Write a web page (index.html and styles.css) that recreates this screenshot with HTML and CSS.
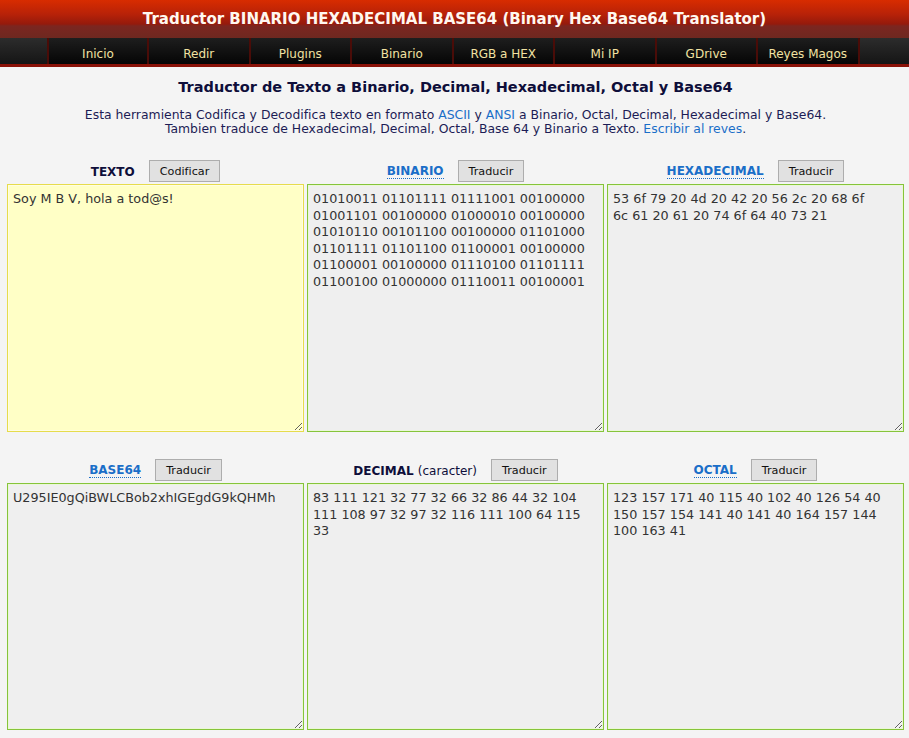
FILE: index.html
```html
<!DOCTYPE html>
<html lang="es">
<head>
<meta charset="utf-8">
<title>Traductor BINARIO HEXADECIMAL BASE64</title>
<link rel="stylesheet" href="styles.css">
</head>
<body>
<header class="top">
  <div class="title">Traductor BINARIO HEXADECIMAL BASE64 (Binary Hex Base64 Translator)</div>
</header>
<nav class="nav">
  <ul class="tabs">
    <li><a href="#">Inicio</a></li>
    <li><a href="#">Redir</a></li>
    <li><a href="#">Plugins</a></li>
    <li><a href="#">Binario</a></li>
    <li><a href="#">RGB a HEX</a></li>
    <li><a href="#">Mi IP</a></li>
    <li><a href="#">GDrive</a></li>
    <li><a href="#">Reyes Magos</a></li>
  </ul>
</nav>
<main class="content">
  <h1 class="heading">Traductor de Texto a Binario, Decimal, Hexadecimal, Octal y Base64</h1>
  <p class="intro">Esta herramienta Codifica y Decodifica texto en formato <a href="#">ASCII</a> y <a href="#">ANSI</a> a Binario, Octal, Decimal, Hexadecimal y Base64.<br>Tambien traduce de Hexadecimal, Decimal, Octal, Base 64 y Binario a Texto. <a href="#">Escribir al reves</a>.</p>

  <div class="grid">
    <div class="cell">
      <div class="label-row"><span class="lbl">TEXTO</span><button class="btn">Codificar</button></div>
      <textarea class="box box-text" spellcheck="false">Soy M B V, hola a tod@s!</textarea>
    </div>
    <div class="cell">
      <div class="label-row"><a class="lbl lnk" href="#">BINARIO</a><button class="btn">Traducir</button></div>
      <textarea class="box" spellcheck="false">01010011 01101111 01111001 00100000 01001101 00100000 01000010 00100000 01010110 00101100 00100000 01101000 01101111 01101100 01100001 00100000 01100001 00100000 01110100 01101111 01100100 01000000 01110011 00100001</textarea>
    </div>
    <div class="cell">
      <div class="label-row"><a class="lbl lnk" href="#">HEXADECIMAL</a><button class="btn">Traducir</button></div>
      <textarea class="box box-hex" spellcheck="false">53 6f 79 20 4d 20 42 20 56 2c 20 68 6f 6c 61 20 61 20 74 6f 64 40 73 21</textarea>
    </div>
    <div class="cell lower">
      <div class="label-row"><a class="lbl lnk" href="#">BASE64</a><button class="btn">Traducir</button></div>
      <textarea class="box" spellcheck="false">U295IE0gQiBWLCBob2xhIGEgdG9kQHMh</textarea>
    </div>
    <div class="cell lower">
      <div class="label-row"><span class="lbl">DECIMAL <span class="sub">(caracter)</span></span><button class="btn">Traducir</button></div>
      <textarea class="box" spellcheck="false">83 111 121 32 77 32 66 32 86 44 32 104 111 108 97 32 97 32 116 111 100 64 115 33</textarea>
    </div>
    <div class="cell lower">
      <div class="label-row"><a class="lbl lnk" href="#">OCTAL</a><button class="btn">Traducir</button></div>
      <textarea class="box" spellcheck="false">123 157 171 40 115 40 102 40 126 54 40 150 157 154 141 40 141 40 164 157 144 100 163 41</textarea>
    </div>
  </div>
</main>
</body>
</html>
```

FILE: styles.css
```css
html, body {
  margin: 0;
  padding: 0;
}
body {
  background: #f4f4f4;
  font-family: "DejaVu Sans", Verdana, sans-serif;
  color: #222;
  overflow: hidden;
}
.top {
  height: 38px;
  background: linear-gradient(to bottom, #d82c00 0px, #b82208 14px, #951a0c 24px, #7c2620 26px, #6e2820 38px);
  display: flex;
  align-items: flex-start;
  justify-content: center;
}
.title {
  color: #fff8f0;
  font-weight: bold;
  font-size: 15px;
  margin-top: 10px;
}
.nav {
  height: 26px;
  background: linear-gradient(to bottom, #2c2c2c, #151515);
  border-bottom: 3px solid #8a1208;
}
.tabs {
  list-style: none;
  margin: 0 0 0 47px;
  padding: 0;
  display: flex;
  height: 26px;
}
.tabs li {
  width: 98px;
  border-left: 2px solid #4a0c08;
  border-right: 2px solid #4a0c08;
  background: linear-gradient(to bottom, #1e1e1e, #050505);
  display: flex;
  align-items: center;
  justify-content: center;
}
.tabs li + li {
  border-left: 0;
  width: 99.5px;
}
.tabs a {
  color: #f2e2a2;
  text-decoration: none;
  font-size: 12px;
  padding-top: 6px;
}
.content {
  padding: 0 5px 0 7px;
}
.heading {
  margin: 12px 0 0;
  text-align: center;
  font-size: 14.5px;
  font-weight: bold;
  color: #0e0e3a;
}
.intro {
  margin: 13px 0 0;
  text-align: center;
  font-size: 12.4px;
  line-height: 14px;
  color: #1c1c55;
}
.intro a, .lnk {
  color: #1a6ec8;
  text-decoration: none;
}
.grid {
  display: grid;
  grid-template-columns: repeat(3, 1fr);
  column-gap: 3px;
  margin-top: 22px;
}
.cell {
  display: flex;
  flex-direction: column;
}
.cell.lower {
  margin-top: 25px;
}
.cell.lower .box {
  height: 247px;
}
.label-row {
  height: 26px;
  display: flex;
  align-items: center;
  justify-content: center;
  gap: 14px;
}
.lbl {
  font-weight: bold;
  font-size: 12px;
  color: #0e0e3a;
  padding-top: 2px;
}
.lnk {
  color: #1a6ec8;
  border-bottom: 1px dotted #1a6ec8;
  line-height: 13px;
}
.sub {
  font-weight: normal;
}
.btn {
  height: 22px;
  padding: 0 10px;
  font-family: "DejaVu Sans", Verdana, sans-serif;
  font-size: 11.2px;
  color: #111;
  background: #e1e1e1;
  border: 1px solid #adadad;
  border-radius: 0;
}
.box {
  box-sizing: border-box;
  width: 100%;
  height: 248px;
  margin: 0;
  padding: 6px 5px;
  font-family: "DejaVu Sans", Verdana, sans-serif;
  font-size: 12.75px;
  line-height: 16.6px;
  color: #333;
  background: #efefef;
  border: 1px solid #86c43a;
  box-shadow: inset 0 0 0 1px #eaf7d8;
  outline: none;
}
.box-hex {
  padding-right: 24px;
}
.box-text {
  background: #ffffc6;
  border-color: #e6dc4c;
  box-shadow: inset 0 0 0 1px #fffde2;
}
```
